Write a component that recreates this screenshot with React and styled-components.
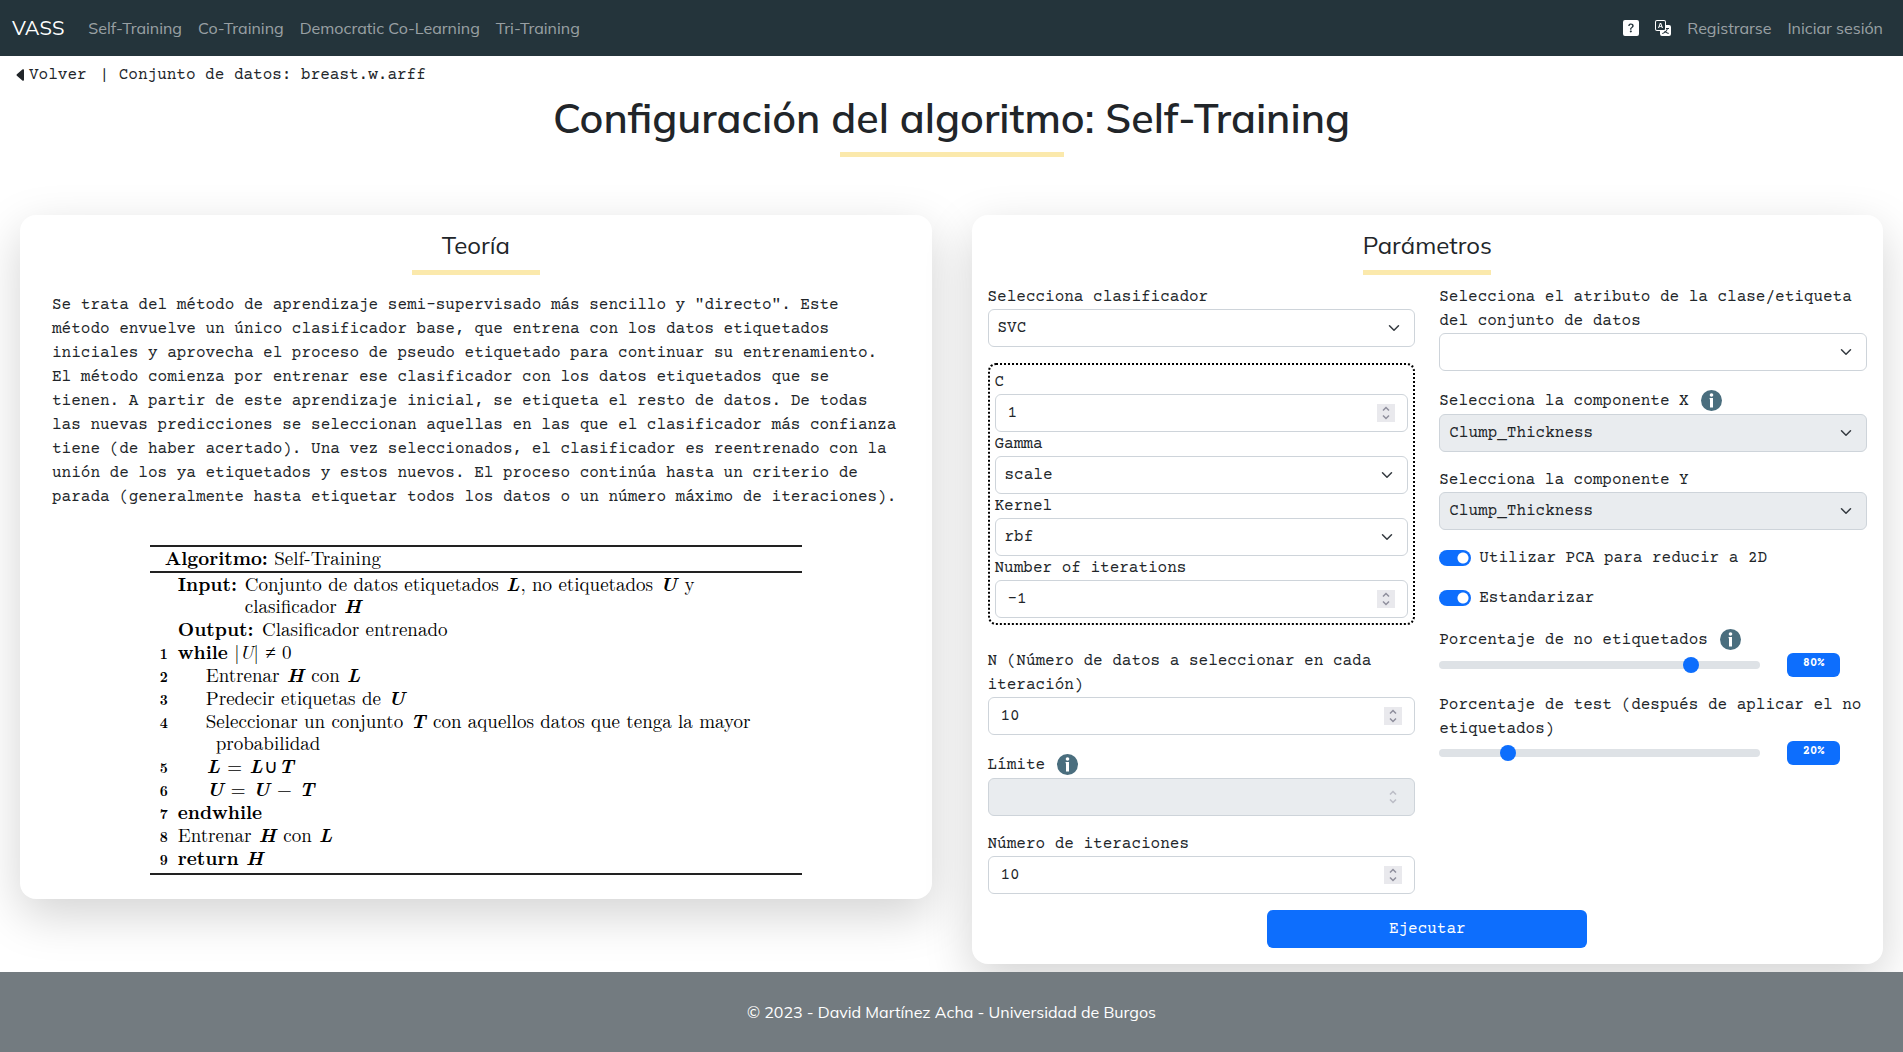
import React, { useId, useState } from 'react';
import styled, { createGlobalStyle } from 'styled-components';
import { BsCaretLeftFill, BsQuestionSquareFill, BsTranslate } from 'react-icons/bs';

const sans = '"Mulish", "Open Sans", "Noto Sans", sans-serif';
const mono = '"Courier Prime", "Liberation Mono", "Courier New", monospace';
const serif = '"CMU Serif", "Latin Modern Roman", "Liberation Serif", "Times New Roman", serif';

const GlobalStyle = createGlobalStyle`
  *, *::before, *::after { box-sizing: border-box; }
  body {
    margin: 0;
    background: #fff;
    color: #212529;
    font: 16px/24px ${mono};
  }
  h1, h2, p, figure { margin: 0; }
`;

const Page = styled.div`
  display: flex;
  flex-direction: column;
  min-height: 100vh;
`;

const Navbar = styled.nav`
  display: flex;
  align-items: center;
  justify-content: space-between;
  height: 56px;
  padding: 0 20px 0 12px;
  background: #24343b;
  font-family: ${sans};
`;

const NavGroup = styled.div`
  display: flex;
  align-items: center;
  gap: 16px;
`;

const Brand = styled.a`
  margin-right: 8px;
  color: #fff;
  font-size: 20px;
  text-decoration: none;
`;

const NavLink = styled.a`
  color: rgba(255, 255, 255, 0.55);
  text-decoration: none;
`;

const NavIcon = styled.button`
  display: flex;
  padding: 0;
  border: 0;
  background: none;
  color: #fff;
  font-size: 16px;
`;

const Main = styled.main`
  flex: 1;
`;

const Breadcrumb = styled.div`
  display: flex;
  gap: 13px;
  padding: 7px 13px;
`;

const BackLink = styled.a`
  display: flex;
  align-items: center;
  color: inherit;
  text-decoration: none;
`;

const PageTitle = styled.h1`
  font: 600 41px/48px ${sans};
  text-align: center;
`;

const Underline = styled.div`
  width: ${(p) => p.$width}px;
  height: 5px;
  margin: 10px auto ${(p) => p.$below}px;
  background: #fbe9ac;
`;

const Cards = styled.div`
  display: grid;
  grid-template-columns: 1fr 1fr;
  align-items: start;
  gap: 40px;
  padding: 0 20px 8px;
`;

const Card = styled.section`
  padding: 16px;
  border-radius: 16px;
  background: #fff;
  box-shadow: 0 16px 48px rgba(0, 0, 0, 0.175);
`;

const CardTitle = styled.h2`
  font: 400 24px/29px ${sans};
  text-align: center;
`;

const Theory = styled.p`
  padding: 0 16px;
`;

const Algorithm = styled.figure`
  max-width: 652px;
  margin: 36px auto 8px;
  border: solid #222;
  border-width: 2px 0;
  color: #000;
  font: 19px/22px ${serif};

  b, i { line-height: 0; }
`;

const AlgorithmTitle = styled.figcaption`
  padding: 0 15px 2px;
  border-bottom: 2px solid #222;
`;

const Steps = styled.div`
  display: grid;
  gap: 1px;
  padding: 0 10px 4px;
`;

const Step = styled.div`
  display: grid;
  grid-template-columns: 18px 1fr;
  align-items: baseline;
`;

const StepNumber = styled.span`
  font-size: 14px;
  font-weight: 700;
  line-height: 14px;
`;

const StepText = styled.div`
  padding-left: ${(p) => (p.$nested ? 28 : 0)}px;
`;

const Hanging = styled.div`
  padding-left: 10px;
`;

const InputRow = styled.div`
  display: grid;
  grid-template-columns: 67px 1fr;
  align-items: baseline;
`;

const Vector = styled.b`
  margin: 0 1px;
  font-style: italic;
`;

const Keyword = styled.b`
  margin-right: 2px;
`;

const Columns = styled.div`
  display: grid;
  grid-template-columns: 1fr 1fr;
  align-items: start;
  gap: 24px;
`;

const Stack = styled.div`
  display: grid;
  gap: 16px;
`;

const Group = styled.div`
  margin-bottom: 8px;
  padding: 5px;
  border: 2px dotted #000;
  border-radius: 8px;
`;

const LabelRow = styled.div`
  display: flex;
  align-items: center;
  gap: 12px;
  min-height: ${(p) => (p.$info ? 27 : 24)}px;
`;

const InfoButton = styled.button`
  display: flex;
  padding: 0;
  border: 0;
  background: none;
`;

const ControlBox = styled.div`
  position: relative;
`;

const Control = styled.input`
  display: block;
  width: 100%;
  height: 38px;
  padding: 0 12px;
  border: 1px solid #ced4da;
  border-radius: 6px;
  background: #fff;
  color: #212529;
  font: 16px/24px ${mono};
  appearance: none;
  -moz-appearance: textfield;

  &::-webkit-inner-spin-button { appearance: none; margin: 0; }
  &:disabled { background: #e9ecef; opacity: 1; }
`;

const Dropdown = styled(Control)`
  padding: 0 36px 0 9px;
`;

const Chevron = styled.svg`
  position: absolute;
  top: 13px;
  right: 13px;
  pointer-events: none;
`;

const Spinner = styled.svg`
  position: absolute;
  top: 10px;
  right: 13px;
  background: ${(p) => (p.$disabled ? 'none' : '#e9e9ed')};
  opacity: ${(p) => (p.$disabled ? 0.5 : 1)};
  pointer-events: none;
`;

const SwitchRow = styled.div`
  display: flex;
  align-items: center;
  gap: 8px;
`;

const Switch = styled.input`
  width: 32px;
  height: 16px;
  margin: 0;
  border-radius: 8px;
  appearance: none;
  background: radial-gradient(circle at 8px 50%, #fff 5px, #adb5bd 6px);

  &:checked { background: radial-gradient(circle at 24px 50%, #fff 5px, #0d6efd 6px); }
`;

const RangeRow = styled.div`
  display: grid;
  grid-template-columns: 3fr 1fr;
  align-items: center;
`;

const Range = styled.input`
  width: 100%;
  height: 24px;
  margin: 0;
  background: none;
  appearance: none;

  &::-webkit-slider-runnable-track {
    height: 8px;
    border-radius: 4px;
    background: #dee2e6;
  }
  &::-webkit-slider-thumb {
    width: 16px;
    height: 16px;
    margin-top: -4px;
    border-radius: 50%;
    background: #0d6efd;
    appearance: none;
  }
`;

const Badge = styled.output`
  justify-self: center;
  width: 50%;
  height: 24px;
  padding-top: 5px;
  border-radius: 6px;
  background: #0d6efd;
  color: #fff;
  font-size: 12px;
  font-weight: 700;
  line-height: 12px;
  text-align: center;
`;

const RunButton = styled.button`
  display: block;
  width: 320px;
  height: 38px;
  margin: 16px auto 0;
  border: 0;
  border-radius: 6px;
  background: #0d6efd;
  color: #fff;
  font: 400 16px/24px ${mono};
`;

const Footer = styled.footer`
  display: flex;
  align-items: center;
  justify-content: center;
  height: 80px;
  background: #737b80;
  color: #fff;
  font-family: ${sans};
`;

function Info() {
  return (
    <InfoButton type="button" aria-label="Información">
      <svg width="21" height="21" viewBox="0 0 21 21">
        <circle cx="10.5" cy="10.5" r="10.5" fill="#4a6e7e" />
        <circle cx="10.5" cy="5" r="1.8" fill="#fff" />
        <path d="M8.6 8h3.4v9.5H9V9.2h-.4z" fill="#fff" />
      </svg>
    </InfoButton>
  );
}

function FieldLabel({ id, text, info }) {
  return (
    <LabelRow $info={info}>
      <label htmlFor={id}>{text}</label>
      {info && <Info />}
    </LabelRow>
  );
}

function SelectField({ label, value, info, disabled }) {
  const id = useId();
  return (
    <div>
      <FieldLabel id={id} text={label} info={info} />
      <ControlBox>
        <Dropdown as="select" id={id} disabled={disabled}>
          <option>{value}</option>
        </Dropdown>
        <Chevron width="16" height="12" viewBox="0 0 16 16">
          <path d="m2 5 6 6 6-6" fill="none" stroke="#343a40" strokeWidth="2" strokeLinecap="round" strokeLinejoin="round" />
        </Chevron>
      </ControlBox>
    </div>
  );
}

function NumberField({ label, value, info, disabled }) {
  const id = useId();
  return (
    <div>
      <FieldLabel id={id} text={label} info={info} />
      <ControlBox>
        <Control type="number" id={id} defaultValue={value} disabled={disabled} />
        <Spinner width="18" height="18" viewBox="0 0 18 18" $disabled={disabled}>
          <path d="m6 6.5 3-3 3 3M6 11.5l3 3 3-3" fill="none" stroke="#8f8f9d" strokeWidth="1.5" />
        </Spinner>
      </ControlBox>
    </div>
  );
}

function SwitchField({ label }) {
  const id = useId();
  return (
    <SwitchRow>
      <Switch type="checkbox" id={id} defaultChecked />
      <label htmlFor={id}>{label}</label>
    </SwitchRow>
  );
}

function RangeField({ label, initial, info }) {
  const id = useId();
  const [value, setValue] = useState(initial);
  return (
    <div>
      <FieldLabel id={id} text={label} info={info} />
      <RangeRow>
        <Range type="range" id={id} value={value} onChange={(e) => setValue(e.target.value)} />
        <Badge htmlFor={id}>{value}%</Badge>
      </RangeRow>
    </div>
  );
}

const H = <Vector>H</Vector>;
const L = <Vector>L</Vector>;
const T = <Vector>T</Vector>;
const U = <Vector>U</Vector>;

const steps = [
  { text: <InputRow><b>Input:</b><div>Conjunto de datos etiquetados {L}, no etiquetados {U} y<br />clasificador {H}</div></InputRow> },
  { text: <><Keyword>Output:</Keyword> Clasificador entrenado</> },
  { n: 1, text: <><b>while</b> |<i>U</i>| ≠ 0</> },
  { n: 2, nested: true, text: <>Entrenar {H} con {L}</> },
  { n: 3, nested: true, text: <>Predecir etiquetas de {U}</> },
  { n: 4, nested: true, text: <>Seleccionar un conjunto {T} con aquellos datos que tenga la mayor<Hanging>probabilidad</Hanging></> },
  { n: 5, nested: true, text: <>{L} = {L}∪{T}</> },
  { n: 6, nested: true, text: <>{U} = {U} − {T}</> },
  { n: 7, text: <b>endwhile</b> },
  { n: 8, text: <>Entrenar {H} con {L}</> },
  { n: 9, text: <><b>return</b> {H}</> },
];

export default function App() {
  return (
    <Page>
      <GlobalStyle />
      <Navbar>
        <NavGroup>
          <Brand href="#">VASS</Brand>
          <NavLink href="#">Self-Training</NavLink>
          <NavLink href="#">Co-Training</NavLink>
          <NavLink href="#">Democratic Co-Learning</NavLink>
          <NavLink href="#">Tri-Training</NavLink>
        </NavGroup>
        <NavGroup>
          <NavIcon type="button" aria-label="Ayuda"><BsQuestionSquareFill /></NavIcon>
          <NavIcon type="button" aria-label="Idioma"><BsTranslate /></NavIcon>
          <NavLink href="#">Registrarse</NavLink>
          <NavLink href="#">Iniciar sesión</NavLink>
        </NavGroup>
      </Navbar>
      <Main>
        <Breadcrumb>
          <BackLink href="#"><BsCaretLeftFill />Volver</BackLink>
          <span>| Conjunto de datos: breast.w.arff</span>
        </Breadcrumb>
        <PageTitle>Configuración del algoritmo: Self-Training</PageTitle>
        <Underline $width={224} $below={58} />
        <Cards>
          <Card>
            <CardTitle>Teoría</CardTitle>
            <Underline $width={128} $below={18} />
            <Theory>
              Se trata del método de aprendizaje semi-supervisado más sencillo y "directo". Este método envuelve
              un único clasificador base, que entrena con los datos etiquetados iniciales y aprovecha el proceso
              de pseudo etiquetado para continuar su entrenamiento. El método comienza por entrenar ese
              clasificador con los datos etiquetados que se tienen. A partir de este aprendizaje inicial, se
              etiqueta el resto de datos. De todas las nuevas predicciones se seleccionan aquellas en las que el
              clasificador más confianza tiene (de haber acertado). Una vez seleccionados, el clasificador es
              reentrenado con la unión de los ya etiquetados y estos nuevos. El proceso continúa hasta un
              criterio de parada (generalmente hasta etiquetar todos los datos o un número máximo de
              iteraciones).
            </Theory>
            <Algorithm>
              <AlgorithmTitle><b>Algoritmo:</b> Self-Training</AlgorithmTitle>
              <Steps>
                {steps.map((step, i) => (
                  <Step key={i}>
                    <StepNumber>{step.n}</StepNumber>
                    <StepText $nested={step.nested}>{step.text}</StepText>
                  </Step>
                ))}
              </Steps>
            </Algorithm>
          </Card>
          <Card as="form" onSubmit={(e) => e.preventDefault()}>
            <CardTitle>Parámetros</CardTitle>
            <Underline $width={128} $below={10} />
            <Columns>
              <Stack>
                <SelectField label="Selecciona clasificador" value="SVC" />
                <Group>
                  <NumberField label="C" value={1} />
                  <SelectField label="Gamma" value="scale" />
                  <SelectField label="Kernel" value="rbf" />
                  <NumberField label="Number of iterations" value={-1} />
                </Group>
                <NumberField label="N (Número de datos a seleccionar en cada iteración)" value={10} />
                <NumberField label="Límite" info disabled />
                <NumberField label="Número de iteraciones" value={10} />
              </Stack>
              <Stack>
                <SelectField label="Selecciona el atributo de la clase/etiqueta del conjunto de datos" value="" />
                <SelectField label="Selecciona la componente X" value="Clump_Thickness" info disabled />
                <SelectField label="Selecciona la componente Y" value="Clump_Thickness" disabled />
                <SwitchField label="Utilizar PCA para reducir a 2D" />
                <SwitchField label="Estandarizar" />
                <RangeField label="Porcentaje de no etiquetados" initial={80} info />
                <RangeField label="Porcentaje de test (después de aplicar el no etiquetados)" initial={20} />
              </Stack>
            </Columns>
            <RunButton type="submit">Ejecutar</RunButton>
          </Card>
        </Cards>
      </Main>
      <Footer>© 2023 - David Martínez Acha - Universidad de Burgos</Footer>
    </Page>
  );
}
